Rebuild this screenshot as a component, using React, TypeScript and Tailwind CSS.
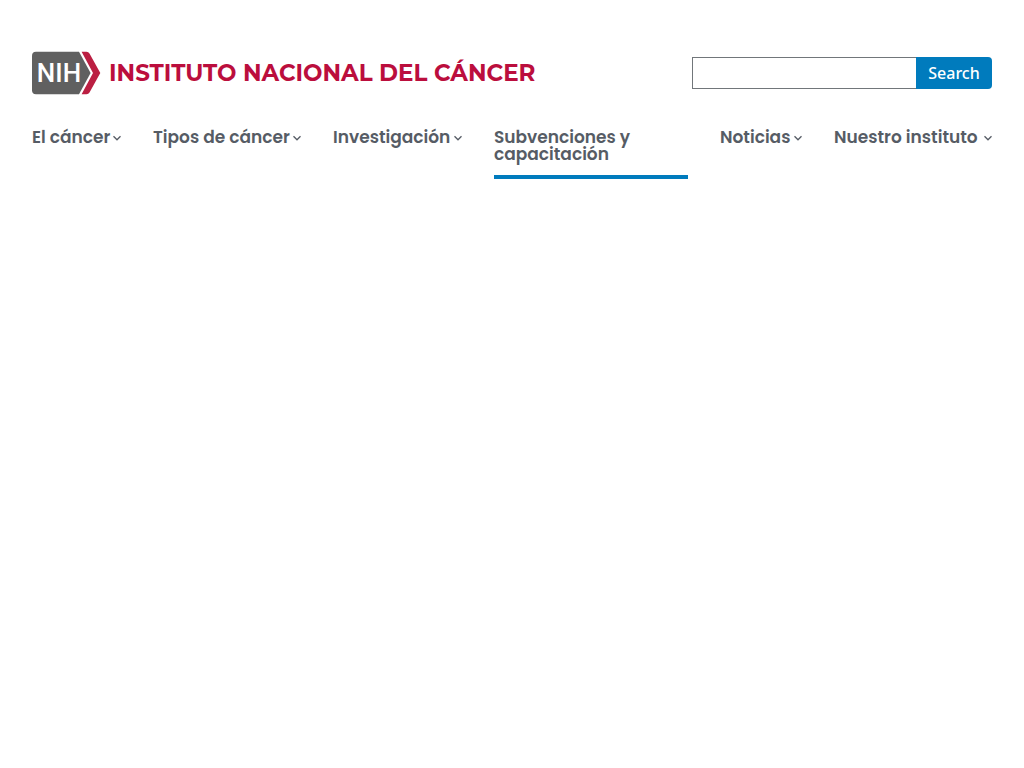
type NavItem = { label: string; menu: boolean; current?: boolean };

const items: NavItem[] = [
  { label: "El cáncer", menu: true },
  { label: "Tipos de cáncer", menu: true },
  { label: "Investigación", menu: true },
  { label: "Subvenciones y capacitación", menu: false, current: true },
  { label: "Noticias", menu: true },
  { label: "Nuestro instituto", menu: true },
];

function Chevron() {
  return (
    <svg className="h-2 w-2 shrink-0" viewBox="0 0 8 8" fill="none" stroke="currentColor" strokeWidth="1.3" aria-hidden="true">
      <path d="M0.5 2.2 4 5.8 7.5 2.2" />
    </svg>
  );
}

function Logo() {
  return (
    <a href="#" className="flex items-center gap-2 text-[#bb0e3d]">
      <svg className="h-11 w-[69px] shrink-0" viewBox="0 0 69 44">
        <path d="M4 .7H47L58.6 22 47 43.3H4Q0 43.3 0 39.3V4.7Q0 .7 4 .7Z" fill="#606060" />
        <path d="M49.6 .7H54.5Q56.5 .7 57.5 2.4L68.3 22 57.5 41.6Q56.5 43.3 54.5 43.3H49.6L61 22Z" fill="#bb1f42" />
        <text x="27" y="31" textAnchor="middle" fill="#fff" className="font-['Roboto',sans-serif] text-[26px] font-medium">
          NIH
        </text>
      </svg>
      <span className="whitespace-nowrap font-['Montserrat','Inter',sans-serif] text-[23px] leading-7 font-bold">
        INSTITUTO NACIONAL DEL CÁNCER
      </span>
    </a>
  );
}

export default function App() {
  return (
    <header className="bg-white px-8 pt-[51px]">
      <div className="flex items-center justify-between gap-8">
        <Logo />
        <form role="search" className="flex h-8 w-[300px]" onSubmit={(e) => e.preventDefault()}>
          <input
            type="search"
            aria-label="Search"
            className="min-w-0 flex-1 rounded-none border border-r-0 border-[#71767a] bg-white px-2 font-['Open_Sans',sans-serif] text-base outline-none"
          />
          <button
            type="submit"
            className="w-[76px] rounded-r bg-[#007bbd] font-['Noto_Sans',sans-serif] text-base leading-4 font-medium text-white"
          >
            Search
          </button>
        </form>
      </div>
      <nav className="mt-[34px]">
        <ul className="grid grid-cols-[89fr_148fr_129fr_194fr_82fr_158fr] gap-8 font-['Poppins','Inter',sans-serif] text-[17px] leading-[17px] font-semibold text-[#565c65]">
          {items.map((item) => (
            <li key={item.label} className="min-w-0">
              {item.menu ? (
                <button type="button" className="flex w-full items-center justify-between whitespace-nowrap text-left">
                  {item.label}
                  <Chevron />
                </button>
              ) : (
                <a href="#" aria-current="page" className="block border-b-4 border-[#007bbd] pr-12 pb-3">
                  {item.label}
                </a>
              )}
            </li>
          ))}
        </ul>
      </nav>
    </header>
  );
}
